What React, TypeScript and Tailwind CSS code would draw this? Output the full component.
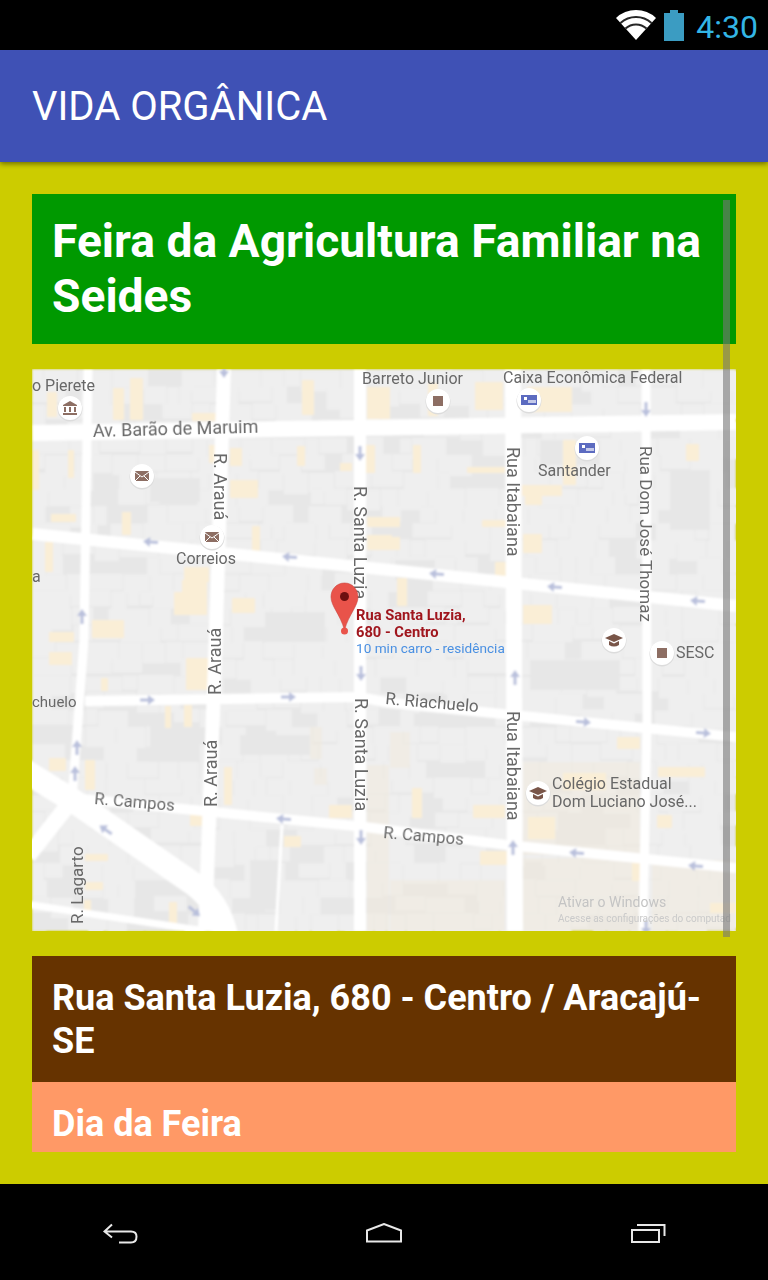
const tan: number[][] = [
  [113,388,11,32],[130,378,13,42],[302,380,12,35],[192,413,27,8],[47,392,10,25],[367,387,23,32],
  [32,450,7,40],[68,450,6,28],[209,445,7,18],[230,448,12,18],[297,446,8,20],[340,463,12,8],[365,445,10,28],
  [230,480,28,18],[51,514,25,8],[122,512,9,23],[252,526,8,25],[367,517,25,10],[367,535,25,15],[45,542,8,30],
  [184,567,25,15],[182,580,25,13],[174,592,33,23],[232,598,23,15],[92,620,32,18],[49,632,25,10],
  [475,382,28,28],[527,387,45,25],[428,383,10,33],[413,445,8,28],[467,467,38,6],[563,440,13,45],[522,485,40,11],
  [525,495,17,10],[482,520,25,7],[390,517,10,10],[390,537,10,13],[523,534,19,19],[495,562,13,15],[397,578,10,28],
  [523,605,29,19],[686,444,13,17],[49,652,23,13],[186,658,22,32],[101,678,7,13],[165,706,6,22],[184,705,8,22],
  [49,758,17,13],[85,760,10,30],[224,767,8,38],[329,805,23,13],[190,813,13,13],[284,836,17,11],[85,854,23,7],
  [85,882,18,8],[84,900,7,16],[169,902,8,22],[412,788,10,30],[473,805,32,13],[480,851,32,14],[528,817,27,22],
  [563,773,43,17],[617,737,23,12],[658,767,47,10],[657,815,15,13],[632,863,10,18],[710,903,26,10],
];

const beige: number[][] = [
  [523,762,117,93],[523,858,117,73],[390,880,115,51],[367,765,22,166],[310,727,12,32],[314,768,13,17],[390,732,20,36],
  [652,860,84,71],
];

// grey patches in the middle of the city blocks
const darkPatches: number[][] = [
  [150,478,50,24],[395,560,40,20],[265,612,60,30],[150,722,50,40],[240,735,70,20],[540,440,60,25],[530,660,90,30],[250,860,30,50],[670,470,40,60],
];

const roads: { d: string; w: number }[] = [
  { d: "M32 433 L736 422", w: 16 },
  { d: "M32 534 L390 570 L736 606", w: 12 },
  { d: "M85 701 L360 697 L390 703 L736 737", w: 10 },
  { d: "M72 798 L365 827 L507 845 L736 868", w: 10 },
  { d: "M20 768 L72 800 L195 885 Q218 902 226 935", w: 24 },
  { d: "M72 800 L28 856", w: 16 },
  { d: "M25 904 L205 931", w: 7 },
  { d: "M88 369 L84 640 L72 800", w: 9 },
  { d: "M224 369 L215 660 L205 931", w: 14 },
  { d: "M360 369 L360 931", w: 12 },
  { d: "M513 369 L515 931", w: 16 },
  { d: "M646 369 L647 720 L643 931", w: 9 },
  { d: "M282 825 L276 931", w: 3 },
];

const arrows: number[][] = [
  [151,542,185],[290,557,185],[360,453,90],[82,617,-90],[224,370,90],[646,409,90],[437,574,185],[555,587,185],
  [698,601,185],[147,700,0],[288,697,0],[361,673,90],[77,748,-90],[75,774,-90],[106,830,215],[284,819,185],
  [361,837,90],[194,911,40],[515,678,-90],[583,722,5],[703,733,5],[513,848,-90],[577,853,185],[696,866,185],[646,927,90],
];

const labels: { t: string; x: number; y: number; r?: number; s: number }[] = [
  { t: "o Pierete", x: 32, y: 391, s: 16 },
  { t: "Barreto Junior", x: 362, y: 384, s: 16 },
  { t: "Caixa Econômica Federal", x: 503, y: 383, s: 16 },
  { t: "Av. Barão de Maruim", x: 93, y: 437, r: -1.5, s: 18 },
  { t: "R. Arauá", x: 214, y: 453, r: 90, s: 18 },
  { t: "Correios", x: 176, y: 564, s: 16 },
  { t: "R. Santa Luzia", x: 354, y: 486, r: 90, s: 18 },
  { t: "Rua Itabaiana", x: 507, y: 447, r: 90, s: 18 },
  { t: "Santander", x: 538, y: 476, s: 16 },
  { t: "Rua Dom José Thomaz", x: 640, y: 446, r: 90, s: 17 },
  { t: "a", x: 32, y: 582, s: 16 },
  { t: "R. Arauá", x: 221, y: 695, r: -90, s: 18 },
  { t: "R. Arauá", x: 217, y: 807, r: -90, s: 18 },
  { t: "R. Santa Luzia", x: 355, y: 698, r: 90, s: 18 },
  { t: "Rua Itabaiana", x: 507, y: 711, r: 90, s: 18 },
  { t: "R. Lagarto", x: 83, y: 924, r: -90, s: 17 },
  { t: "R. Campos", x: 94, y: 804, r: 5, s: 16.6 },
  { t: "R. Campos", x: 383, y: 838, r: 5, s: 16.6 },
  { t: "R. Riachuelo", x: 385, y: 704, r: 5, s: 17 },
  { t: "chuelo", x: 32, y: 707, s: 15 },
  { t: "SESC", x: 676, y: 658, s: 16 },
  { t: "Colégio Estadual", x: 552, y: 789, s: 16 },
  { t: "Dom Luciano José...", x: 552, y: 807, s: 16 },
];

// fake building footprints, same result on every render
function makeBuildings() {
  const out: number[][] = [];
  let seed = 7;
  const rnd = () => {
    seed = (seed * 16807) % 2147483647;
    return seed / 2147483647;
  };
  for (let y = 369; y < 931; y += 17) {
    let x = 32;
    while (x < 736) {
      const w = 12 + rnd() * 30;
      if (rnd() > 0.15) out.push([x, y + rnd() * 2, w - 1, 14 + rnd() * 8]);
      x += w;
    }
  }
  return out;
}
const buildings = makeBuildings();

function Marker({ x, y, kind }: { x: number; y: number; kind: string }) {
  return (
    <g transform={`translate(${x} ${y})`}>
      <circle r="12.5" cy="1" fill="#dcdcdc" />
      <circle r="12" fill="#ffffff" />
      {kind === "square" && <rect x="-5" y="-5" width="10" height="10" fill="#8d6e63" />}
      {kind === "mail" && (
        <g>
          <rect x="-7" y="-5" width="14" height="10" rx="1" fill="#8d6e63" />
          <path d="M-7 -4 L0 1 L7 -4 M-7 5 L-2 0 M7 5 L2 0" stroke="#fff" strokeWidth="1" fill="none" />
        </g>
      )}
      {kind === "bank" && (
        <g>
          <rect x="-8" y="-5" width="16" height="10" fill="#5c6bc0" />
          <rect x="-5" y="-3" width="3" height="3" fill="#fff" />
          <rect x="-1" y="0" width="8" height="3" fill="#c5cae9" />
        </g>
      )}
      {kind === "museum" && (
        <path d="M0 -7 L7 -3 V-2 H-7 V-3 Z M-6 -1 H-4 V4 H-6 Z M-1 -1 H1 V4 H-1 Z M4 -1 H6 V4 H4 Z M-7 5 H7 V7 H-7 Z" fill="#8d6e63" />
      )}
      {kind === "school" && (
        <path d="M0 -6 L9 -2 L0 2 L-9 -2 Z M-5 1 L0 3.5 L5 1 V5 Q0 8 -5 5 Z" fill="#795548" />
      )}
    </g>
  );
}

function MapPicture() {
  return (
    <svg viewBox="32 369 704 562" className="block w-full h-[562px]" style={{ fontFamily: "Roboto, sans-serif" }}>
      <defs>
        <filter id="soft" x="0" y="0" width="100%" height="100%">
          <feGaussianBlur stdDeviation="0.8" />
        </filter>
        <filter id="softText">
          <feGaussianBlur stdDeviation="0.35" />
        </filter>
      </defs>
      <g filter="url(#soft)">
        <rect x="32" y="369" width="704" height="562" fill="#e7e7e7" />
        {buildings.map((b, i) => (
          <rect key={i} x={b[0]} y={b[1]} width={b[2]} height={b[3]} fill="#efefef" />
        ))}
        {darkPatches.map((b, i) => (
          <rect key={i} x={b[0]} y={b[1]} width={b[2]} height={b[3]} fill="#e7e7e7" />
        ))}
        {beige.map((b, i) => (
          <rect key={i} x={b[0]} y={b[1]} width={b[2]} height={b[3]} fill="#f0e9dc" opacity="0.55" />
        ))}
        {tan.map((b, i) => (
          <rect key={i} x={b[0]} y={b[1]} width={b[2]} height={b[3]} fill="#faeed6" />
        ))}
        {roads.map((r, i) => (
          <path key={i} d={r.d} stroke="#ffffff" strokeWidth={r.w} fill="none" />
        ))}
        {arrows.map((a, i) => (
          <path
            key={i}
            transform={`translate(${a[0]} ${a[1]}) rotate(${a[2]})`}
            d="M-7 -1.5 H1 V-5 L8 0 L1 5 V1.5 H-7 Z"
            fill="#b9c0dc"
          />
        ))}
      </g>

      <Marker x={70} y={408} kind="museum" />
      <Marker x={142} y={476} kind="mail" />
      <Marker x={212} y={537} kind="mail" />
      <Marker x={438} y={401} kind="square" />
      <Marker x={529} y={400} kind="bank" />
      <Marker x={587} y={448} kind="bank" />
      <Marker x={614} y={640} kind="school" />
      <Marker x={662} y={653} kind="square" />
      <Marker x={538} y={793} kind="school" />

      <g filter="url(#softText)">
        {labels.map((l, i) => (
          <text
            key={i}
            x={l.x}
            y={l.y}
            fontSize={l.s}
            fill="#686868"
            transform={l.r ? `rotate(${l.r} ${l.x} ${l.y})` : undefined}
          >
            {l.t}
          </text>
        ))}
        <text x="356" y="620" fontSize="14.7" fontWeight="700" fill="#a0161f">Rua Santa Luzia,</text>
        <text x="356" y="637" fontSize="14.7" fontWeight="700" fill="#a0161f">680 - Centro</text>
        <text x="356" y="653" fontSize="13.6" fill="#4a90e2">10 min carro - residência</text>
        <text x="558" y="907" fontSize="14" fill="#c4c4c4">Ativar o Windows</text>
        <text x="558" y="922" fontSize="10" fill="#cacaca">Acesse as configurações do computad</text>
      </g>

      {/* pin */}
      <path d="M344.5 583 C336 583 331 590 331 597 C331 606 340 614 344.5 630 C349 614 358 606 358 597 C358 590 353 583 344.5 583 Z" fill="#e9534a" stroke="#c9453e" strokeWidth="0.6" />
      <circle cx="344.5" cy="596.5" r="4.5" fill="#6d1010" />
      <circle cx="344.5" cy="631" r="3.5" fill="#e9534a" />
    </svg>
  );
}

function StatusBar() {
  return (
    <div className="h-[50px] bg-black flex items-start justify-end">
      <svg width="42" height="33" viewBox="0 0 42 33" className="mt-[8px] mr-[7px]">
        <path d="M21 32 L1 10 A29 29 0 0 1 41 10 Z" fill="#ffffff" />
        <path d="M5.5 15 A23 23 0 0 1 36.5 15" stroke="#000" strokeWidth="2" fill="none" opacity="0.85" />
        <path d="M10.5 20.5 A15.5 15.5 0 0 1 31.5 20.5" stroke="#000" strokeWidth="2" fill="none" opacity="0.85" />
      </svg>
      <div className="mt-[10px] flex flex-col items-center w-[20px]">
        <div className="w-[8px] h-[3px] bg-[#3b9cc2]" />
        <div className="w-[20px] h-[28px] bg-[#3b9cc2]" />
      </div>
      <span className="ml-[12px] mr-[10px] mt-[9px] text-[32px] leading-[37px] text-[#33b5e5] font-['Roboto',sans-serif]">4:30</span>
    </div>
  );
}

function NavBar() {
  return (
    <div className="h-[96px] bg-black flex items-start justify-between px-[102px] pt-[39px]">
      <svg width="36" height="22" viewBox="0 0 36 22" fill="none" stroke="#e8e8e8" strokeWidth="2">
        <path d="M10 1.5 L2.5 8.5 L10 14.5 M3 8.5 H29 Q34.5 8.5 34.5 13.5 Q34.5 19.5 29 19.5 H17" />
      </svg>
      <svg width="38" height="20" viewBox="0 0 38 20" fill="none" stroke="#e8e8e8" strokeWidth="2">
        <path d="M2 18.5 V7.5 L19 1 L36 7.5 V18.5 Z" />
      </svg>
      <svg width="36" height="20" viewBox="0 0 36 20" fill="none" stroke="#e8e8e8" strokeWidth="2">
        <rect x="2" y="7" width="27" height="12" />
        <path d="M7 2 H34.5 V13" />
      </svg>
    </div>
  );
}

export default function App() {
  return (
    <div className="w-[768px] h-[1280px] flex flex-col overflow-hidden font-['Roboto',sans-serif]">
      <StatusBar />
      <header className="h-[112px] bg-[#3f51b5] shadow-[0_2px_5px_rgba(0,0,0,0.45)] z-10 flex items-center px-[32px] pt-[1px]">
        <h1 className="text-[40px] font-normal leading-none text-white">VIDA ORGÂNICA</h1>
      </header>
      <main className="relative flex-1 bg-[#cccc00] px-[32px] pt-[32px]">
        <h2 className="bg-[#009900] text-white font-bold text-[46.2px] leading-[55px] px-[20px] pt-[20px] h-[150px]">
          Feira da Agricultura Familiar na Seides
        </h2>
        <div className="mt-[25px]">
          <MapPicture />
        </div>
        <p className="mt-[25px] bg-[#663300] text-white font-bold text-[36px] leading-[43px] px-[20px] pt-[21px] h-[126px]">
          Rua Santa Luzia, 680 - Centro / Aracajú-SE
        </p>
        <p className="bg-[#ff9966] text-white font-bold text-[36px] leading-[43px] px-[20px] pt-[21px] h-[70px]">
          Dia da Feira
        </p>
        <div className="absolute left-[723px] top-[38px] w-[7px] h-[737px] bg-[#777777]/60" />
      </main>
      <NavBar />
    </div>
  );
}
